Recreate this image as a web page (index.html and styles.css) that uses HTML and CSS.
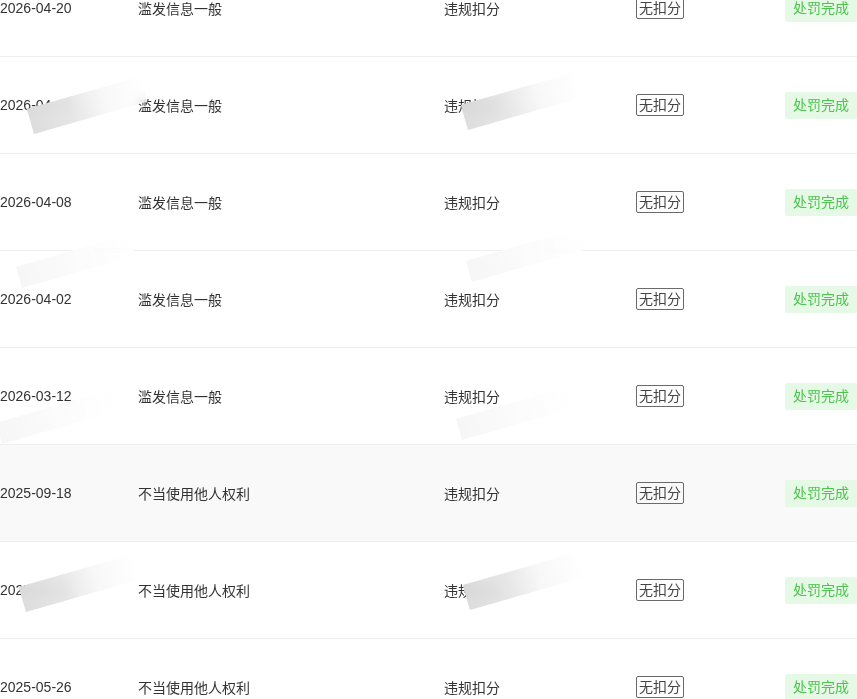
FILE: index.html
```html
<!DOCTYPE html>
<html lang="zh-CN">
<head>
<meta charset="utf-8">
<title>违规记录</title>
<link rel="stylesheet" href="styles.css">
</head>
<body>
<div class="list">
  <div class="row"><span class="date">2026-04-20</span><span class="reason">滥发信息一般</span><span class="type">违规扣分</span><span class="score"><em class="tag">无扣分</em></span><span class="status"><em class="done">处罚完成</em></span></div>
  <div class="row"><span class="date">2026-04-14</span><span class="reason">滥发信息一般</span><span class="type">违规扣分</span><span class="score"><em class="tag">无扣分</em></span><span class="status"><em class="done">处罚完成</em></span></div>
  <div class="row"><span class="date">2026-04-08</span><span class="reason">滥发信息一般</span><span class="type">违规扣分</span><span class="score"><em class="tag">无扣分</em></span><span class="status"><em class="done">处罚完成</em></span></div>
  <div class="row"><span class="date">2026-04-02</span><span class="reason">滥发信息一般</span><span class="type">违规扣分</span><span class="score"><em class="tag">无扣分</em></span><span class="status"><em class="done">处罚完成</em></span></div>
  <div class="row"><span class="date">2026-03-12</span><span class="reason">滥发信息一般</span><span class="type">违规扣分</span><span class="score"><em class="tag">无扣分</em></span><span class="status"><em class="done">处罚完成</em></span></div>
  <div class="row hover"><span class="date">2025-09-18</span><span class="reason">不当使用他人权利</span><span class="type">违规扣分</span><span class="score"><em class="tag">无扣分</em></span><span class="status"><em class="done">处罚完成</em></span></div>
  <div class="row"><span class="date">2025-08-11</span><span class="reason">不当使用他人权利</span><span class="type">违规扣分</span><span class="score"><em class="tag">无扣分</em></span><span class="status"><em class="done">处罚完成</em></span></div>
  <div class="row"><span class="date">2025-05-26</span><span class="reason">不当使用他人权利</span><span class="type">违规扣分</span><span class="score"><em class="tag">无扣分</em></span><span class="status"><em class="done">处罚完成</em></span></div>
</div>
<div class="wm wm-a" style="left:34px;top:108px"></div>
<div class="wm wm-a" style="left:468px;top:104px"></div>
<div class="wm" style="left:22px;top:266px"></div>
<div class="wm" style="left:472px;top:260px"></div>
<div class="wm" style="left:2px;top:422px"></div>
<div class="wm" style="left:462px;top:418px"></div>
<div class="wm wm-a" style="left:26px;top:586px"></div>
<div class="wm wm-a" style="left:470px;top:584px"></div>
</body>
</html>
```

FILE: styles.css
```css
html, body {
  margin: 0;
  padding: 0;
  background: #ffffff;
  overflow: hidden;
}
body {
  font-family: "Liberation Sans", "Noto Sans CJK SC", sans-serif;
  font-size: 14px;
  color: #333333;
  position: relative;
}
.list {
  margin-top: -40px;
}
.row {
  display: grid;
  grid-template-columns: 138px 306px 192px 149px 72px;
  align-items: center;
  height: 96px;
  border-bottom: 1px solid #efefef;
}
.row.hover {
  background: #f9f9f9;
}
.row span {
  white-space: nowrap;
}
em {
  font-style: normal;
}
.tag {
  display: inline-block;
  border: 1px solid #6a6a6a;
  border-radius: 2px;
  padding: 0 2px;
  line-height: 20px;
  color: #444444;
}
.done {
  display: inline-block;
  background: #e6f8e6;
  color: #4dc44d;
  padding: 0 8px;
  line-height: 27px;
  border-radius: 2px;
}
.wm {
  position: absolute;
  width: 118px;
  height: 22px;
  transform: rotate(-16deg);
  transform-origin: left bottom;
  background: linear-gradient(to right, rgba(244,244,244,0.8), rgba(250,250,250,0.75) 50%, rgba(255,255,255,0.5));
  backdrop-filter: blur(3px);
  filter: blur(0.6px);
}
.wm-a {
  height: 26px;
  background: linear-gradient(to right, rgba(218,218,218,0.92), rgba(226,226,226,0.88) 35%, rgba(246,246,246,0.8) 65%, rgba(255,255,255,0.55));
  backdrop-filter: blur(6px);
}
```
